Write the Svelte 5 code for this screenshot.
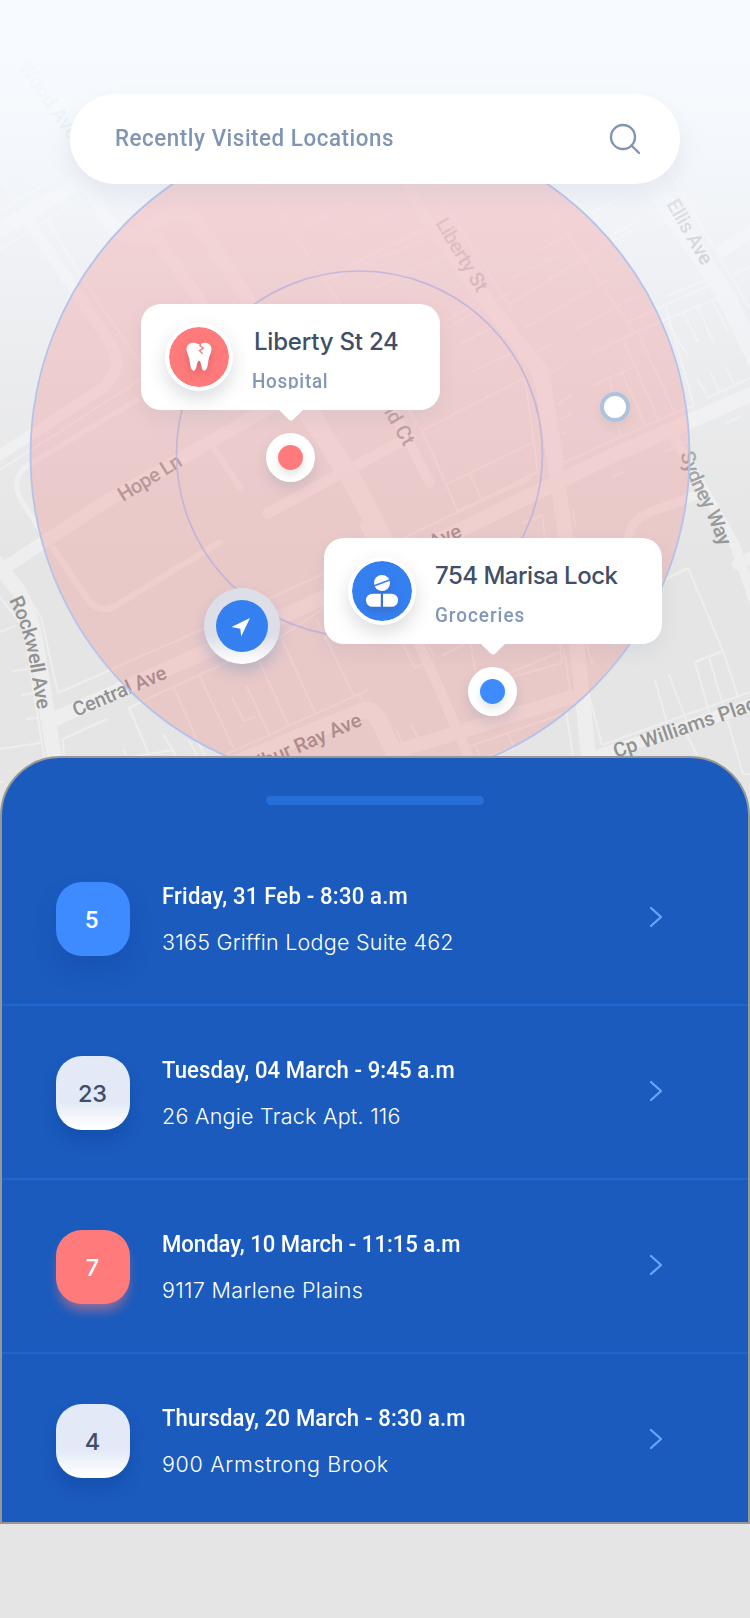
<script>
  const visits = [
    { day: '5', tone: 'blue', time: 'Friday, 31 Feb - 8:30 a.m', timeWidth: 244, place: '3165 Griffin Lodge Suite 462', placeWidth: 289.5 },
    { day: '23', tone: 'light', time: 'Tuesday, 04 March - 9:45 a.m', timeWidth: 290.5, place: '26 Angie Track Apt. 116', placeWidth: 236.5 },
    { day: '7', tone: 'red', time: 'Monday, 10 March - 11:15 a.m', timeWidth: 297, place: '9117 Marlene Plains', placeWidth: 199 },
    { day: '4', tone: 'light', time: 'Thursday, 20 March - 8:30 a.m', timeWidth: 301.5, place: '900 Armstrong Brook', placeWidth: 224 }
  ];

  // Spreads the letters of a line so that it fills the given width.
  // A squeeze below 1 narrows the glyphs themselves first.
  function track(node, { width, squeeze = 1 }) {
    const natural = node.offsetWidth;
    const gaps = node.textContent.length - 1;
    node.style.letterSpacing = `${((width + 2) / squeeze - natural) / gaps}px`;
    if (squeeze !== 1) node.style.transform = `scaleX(${squeeze})`;
  }

  const wideRoads = [
    [14, 'M0 230 L77 184 Q84 180 90 190 L110 224 Q118 236 135 234 L172 213 Q184 206 197 222 L253 307 L350 477 L412 610'],
    [12, 'M135 236 Q152 232 160 243 L213 320'],
    [11, 'M30 223 L112 346 Q124 368 103 388 L0 455'],
    [13, 'M0 571 L97 507 L290 396'],
    [6, 'M210 443 L240 487'],
    [11, 'M268 513 L340 474 L410 437'],
    [20, 'M307 410 L350 477 Q372 515 395 565'],
    [10, 'M385 395 L430 483'],
    [5, 'M137 400 L27 466 Q11 478 20 498 L40 530'],
    [6, 'M53 548 L88 600 Q100 615 117 605 L220 542'],
    [11, 'M408 190 L478 295'],
    [15, 'M478 290 L536 366 Q543 380 546 405 L565 530 L577 647 L589 760'],
    [15, 'M750 395 L688 422 L605 459 L458 531 L325 597 L207 651 L57 718'],
    [18, 'M652 183 L728 300 L770 390'],
    [12, 'M722 251 L760 226'],
    [15, 'M-4 562 L18 590 Q32 612 37 650 L58 780'],
    [10, 'M672 433 L735 545 L757 610'],
    [12, 'M738 564 L756 555'],
    [9, 'M629 535 Q632 520 648 513 L697 495'],
    [14, 'M395 752 L572 697'],
    [17, 'M220 770 L362 711 Q372 708 378 718 L400 765'],
    [12, 'M594 757 L760 702'],
    [10, 'M365 525 L440 690 L470 760']
  ];

  const thinRoads = [
    'M47 220 L90 290 L141 364', 'M0 250 L83 197', 'M0 211 L80 163', 'M0 177 L17 200', 'M13 147 L38 190',
    'M50 167 L59 176', 'M0 470 L140 380', 'M263 187 L340 303', 'M297 230 L353 202', 'M338 240 L390 214',
    'M347 267 L420 230', 'M323 280 L430 238', 'M435 185 Q444 210 450 213 L512 310', 'M495 303 L548 370 L563 463 L690 406',
    'M395 245 L445 220', 'M375 288 L460 248', 'M448 320 L476 303', 'M461 343 L492 328', 'M473 371 L512 353',
    'M447 328 L510 292', 'M512 278 L558 255', 'M536 252 L604 214', 'M548 279 L632 230', 'M510 304 L570 268',
    'M542 197 L617 307 L633 330', 'M592 213 L649 183', 'M608 237 L636 223', 'M652 211 L666 203', 'M658 226 L684 214',
    'M526 327 L608 280', 'M577 329 L636 296', 'M538 351 L552 344', 'M551 372 L562 367', 'M558 404 L571 396',
    'M560 419 L571 414', 'M562 434 L567 432', 'M592 353 L650 326 L735 291', 'M628 322 L750 267', 'M594 385 L634 367',
    'M624 341 L658 419', 'M638 333 L674 411', 'M622 373 L645 425', 'M610 380 L620 437', 'M666 308 L694 406 L675 413',
    'M668 323 L688 356', 'M683 312 L698 342', 'M698 307 L713 342', 'M712 300 L728 331', 'M668 170 L752 312',
    'M667 296 L708 279', 'M698 379 L708 398 L752 377', 'M711 373 L719 391', 'M726 368 L734 384', 'M726 423 L740 417',
    'M666 451 L691 440', 'M612 477 L623 472', 'M408 410 L423 432 L458 512', 'M423 430 L525 378', 'M525 378 L538 472 L458 511',
    'M447 484 L532 443', 'M470 475 L482 500', 'M573 510 L575 525', 'M523 523 L542 515 L545 540',
    'M395 542 L458 512 L530 479', 'M325 573 L203 629 L58 693 L41 617 L13 575', 'M330 604 L281 637 L160 693 L129 708 L148 752',
    'M0 597 L24 628 L44 757', 'M0 632 L15 626', 'M12 671 L28 669', 'M22 695 L34 693', 'M27 719 L36 718', 'M0 749 L40 743',
    'M64 757 L63 739 L107 719', 'M130 757 L173 750', 'M163 734 L176 756', 'M174 688 L197 740', 'M200 677 L233 747',
    'M281 637 L315 713', 'M260 663 L288 724', 'M247 687 L270 736', 'M232 698 L244 721 L255 717', 'M317 620 L354 696',
    'M227 754 L368 690', 'M360 695 L372 725', 'M189 741 L198 757', 'M198 742 L206 757', 'M124 750 L127 757',
    'M396 630 L415 668 L430 661', 'M425 641 L434 655', 'M443 655 L465 644', 'M470 640 L475 670', 'M508 678 L562 663 L555 600',
    'M515 695 L505 675 L560 652', 'M564 650 L570 690', 'M585 640 L592 663', 'M566 710 L573 757', 'M585 680 L602 745 L750 692',
    'M462 749 L562 714', 'M397 731 L405 750', 'M411 724 L420 742', 'M475 745 L480 757', 'M508 734 L514 747 L487 757',
    'M664 580 L688 568 L723 651 L738 697', 'M695 662 L723 651', 'M695 662 L709 712', 'M709 657 L743 774 L755 774',
    'M655 680 L669 730', 'M669 675 L690 730', 'M687 735 L698 757', 'M0 782 L3 782'
  ];
</script>

<main class="screen">
  <section class="map">
    <svg class="streets" width="750" height="860" viewBox="0 0 750 860">
      <defs>
        <linearGradient id="haze" x1="0" y1="0" x2="0" y2="1">
          <stop offset="0" stop-color="#f7fbff" />
          <stop offset="0.17" stop-color="#f7fbff" stop-opacity="0.96" />
          <stop offset="0.45" stop-color="#f5f8fe" stop-opacity="0.67" />
          <stop offset="0.72" stop-color="#f4f6fa" stop-opacity="0.34" />
          <stop offset="1" stop-color="#f4f6fa" stop-opacity="0" />
        </linearGradient>
        <path id="rockwell" d="M9 600 Q24 630 29 660 L40 725" />
        <path id="sydney" d="M680 454 Q690 484 705 511 L726 562" />
      </defs>
      <rect width="750" height="860" fill="#e5e5e5" />
      <g class="roads">
        {#each wideRoads as [width, d]}
          <path {d} stroke-width={width} />
        {/each}
        {#each thinRoads as d}
          <path {d} stroke-width="2" />
        {/each}
      </g>
      <g class="names">
        <text transform="translate(18 67) rotate(55)">Wood Ave</text>
        <text transform="translate(435 223) rotate(59)" textLength="82">Liberty St</text>
        <text transform="translate(666 204) rotate(60)" textLength="72">Ellis Ave</text>
        <text transform="translate(404 447) rotate(60)" text-anchor="end">Field Ct</text>
        <text transform="translate(123 502) rotate(-31.5)" textLength="71">Hope Ln</text>
        <text transform="translate(76 717) rotate(-23)" textLength="100">Central Ave</text>
        <text transform="translate(463 536) rotate(-24)" text-anchor="end">Central Ave</text>
        <text transform="translate(363 725) rotate(-23.5)" text-anchor="end">Wilbur Ray Ave</text>
        <text transform="translate(616 758) rotate(-19)">Cp Williams Place</text>
        <text><textPath href="#rockwell" textLength="114">Rockwell Ave</textPath></text>
        <text><textPath href="#sydney" textLength="101">Sydney Way</textPath></text>
      </g>
      <rect width="750" height="560" fill="url(#haze)" />
      <circle cx="360" cy="455" r="329.5" fill="#f47f7f" fill-opacity="0.28" stroke="#b5c3ea" stroke-width="1.8" />
      <circle cx="359.5" cy="454" r="183" fill="none" stroke="#b4b0dc" stroke-opacity="0.75" stroke-width="1.7" />
    </svg>

    <div class="search">
      <span class="query"><span use:track={{ width: 276, squeeze: 0.93 }}>Recently Visited Locations</span></span>
      <svg width="32" height="32" viewBox="0 0 32 32">
        <circle cx="14" cy="14" r="12" />
        <path d="M22.5 22.5 L30 30" />
      </svg>
    </div>

    <article class="card liberty">
      <div class="emblem coral">
        <svg width="26" height="30" viewBox="0 0 26 30">
          <path fill="#fff" d="M13 2.6 C9 .2 4.800 .3 2.300 2.700 C-.3 5.200 .2 9.400 2 13 C3.300 15.700 3.500 18 4 21.500 C4.500 25.200 5.600 28.500 7.700 28.800 C11 29.200 10.300 19.500 13 18.600 C15.700 19.500 15 29.200 18.300 28.800 C20.400 28.500 21.500 25.200 22 21.500 C22.500 18 22.700 15.700 24 13 C25.800 9.400 26.300 5.200 23.700 2.700 C21.200 .3 17 .2 13 2.600 Z" />
          <path fill="none" stroke="#ff7b7b" stroke-width="1.500" d="M15 .5 L14 3.800 L17.300 6.200 L13.600 8.700 L16.600 11.800" />
        </svg>
      </div>
      <div class="details">
        <h2 class="indent"><span use:track={{ width: 142.5 }}>Liberty St 24</span></h2>
        <p class="cut"><span use:track={{ width: 74, squeeze: 0.92 }}>Hospital</span></p>
      </div>
      <svg class="tip" width="30" height="13" viewBox="0 0 30 13"><path d="M2 0 H28 L17.500 10.300 Q15 12.700 12.500 10.300 Z" /></svg>
    </article>
    <div class="pin coral-pin"><i></i></div>

    <article class="card marisa">
      <div class="emblem azure">
        <svg width="34" height="34" viewBox="0 0 34 34">
          <circle cx="17" cy="9" r="8" fill="#fff" />
          <path d="M8.500 12 L25.500 5.700" stroke="#3580f0" stroke-width="1.700" />
          <path fill="#fff" d="M7.500 19.700 H15.800 V32.800 H7.500 A6.500 6.500 0 0 1 7.500 19.700 Z M18 19.700 H26.500 A6.500 6.500 0 0 1 26.500 32.800 H18 Z" />
        </svg>
      </div>
      <div class="details">
        <h2><span use:track={{ width: 181 }}>754 Marisa Lock</span></h2>
        <p><span use:track={{ width: 87, squeeze: 0.92 }}>Groceries</span></p>
      </div>
      <svg class="tip" width="30" height="13" viewBox="0 0 30 13"><path d="M2 0 H28 L17.500 10.300 Q15 12.700 12.500 10.300 Z" /></svg>
    </article>
    <div class="pin azure-pin"><i></i></div>

    <div class="here">
      <svg width="52" height="52" viewBox="0 0 52 52">
        <circle cx="26" cy="26" r="26" fill="#3580f0" />
        <path d="M15.500 27 L34 18 L25.200 36.500 L24.300 28.700 Z" fill="#fff" />
      </svg>
    </div>
    <div class="spot"></div>
  </section>

  <section class="sheet">
    <div class="handle"></div>
    <ul>
      {#each visits as visit}
        <li>
          <div class="day {visit.tone}">{visit.day}</div>
          <div class="visit">
            <h3><span use:track={{ width: visit.timeWidth, squeeze: 0.92 }}>{visit.time}</span></h3>
            <p><span use:track={{ width: visit.placeWidth }}>{visit.place}</span></p>
          </div>
          <svg class="chevron" width="14" height="22" viewBox="0 0 14 22"><path d="M2 2 L12 11 L2 20" /></svg>
        </li>
      {/each}
    </ul>
  </section>
</main>

<style>
  :global(body) { margin: 0; background: #e5e5e5; }
  .screen { width: 750px; height: 1618px; overflow: hidden; background: #e5e5e5; display: flex; flex-direction: column; }
  .map { position: relative; height: 756px; flex: none; padding: 94px 70px 0; box-sizing: border-box; }
  .streets { position: absolute; left: 0; top: 0; }
  .roads path { fill: none; stroke: #eeeeee; stroke-linecap: round; stroke-linejoin: round; }
  .names { font: 500 20px Roboto, sans-serif; fill: #929292; }

  .search {
    position: relative; height: 90px; border-radius: 45px; background: #fff;
    box-shadow: 0 10px 22px rgba(140, 165, 185, 0.16);
    display: flex; align-items: center; justify-content: space-between; box-sizing: border-box; padding: 0 39px 0 45px;
  }
  .query { font: 500 24px/30px Roboto, sans-serif; color: #8094b4; padding-bottom: 2px; white-space: nowrap; }
  .search svg { fill: none; stroke: #8094b4; stroke-width: 2.400; stroke-linecap: round; }

  .card {
    position: absolute; height: 106px; border-radius: 20px; background: #fff; display: flex; box-sizing: border-box;
    padding: 19px 0 0 24px; gap: 19px; box-shadow: 0 8px 18px rgba(120, 140, 160, 0.12);
  }
  .liberty { left: 141px; top: 304px; width: 299px; }
  .marisa { left: 324px; top: 538px; width: 338px; }
  .emblem {
    width: 60px; height: 60px; border: 4.500px solid #fff; border-radius: 50%; flex: none;
    display: grid; place-items: center; box-shadow: 0 8px 18px rgba(60, 65, 75, 0.18); background-clip: padding-box;
  }
  .coral { background-color: #ff7b7b; }
  .azure { background-color: #3580f0; }
  .emblem svg { filter: drop-shadow(0 4px 4px rgba(60, 20, 50, 0.18)); }
  h2, h3, p { margin: 0; white-space: nowrap; }
  span { display: inline-block; transform-origin: 0 50%; }
  h2 { font: 500 24px/30px Inter, sans-serif; color: #404e68; margin-top: 4px; }
  .card p { font: 500 20.500px/24px Roboto, sans-serif; color: #8297b8; margin-top: 12px; }
  .indent { padding-left: 2px; }
  .cut { height: 20px; overflow: hidden; }
  .tip { position: absolute; top: 105px; fill: #fff; }
  .liberty .tip { left: 134.500px; }
  .marisa .tip { left: 154px; }

  .pin {
    position: absolute; width: 49px; height: 49px; border-radius: 50%; background: #fff; display: grid; place-items: center;
    box-shadow: 0 6px 12px rgba(110, 130, 150, 0.22);
  }
  .pin i { width: 25px; height: 25px; border-radius: 50%; box-shadow: 0 5px 8px rgba(60, 70, 80, 0.14); }
  .coral-pin { left: 266px; top: 433px; }
  .coral-pin i { background: #ff7b7b; }
  .azure-pin { left: 468px; top: 667px; }
  .azure-pin i { background: #3d8bff; }
  .here {
    position: absolute; left: 203.500px; top: 588px; width: 76px; height: 76px; border-radius: 50%;
    background: linear-gradient(#dcdfe7 62%, #fff); display: grid; place-items: center;
    box-shadow: 0 8px 14px rgba(110, 150, 190, 0.38);
  }
  .spot {
    position: absolute; left: 600px; top: 392px; width: 22px; height: 22px; border: 4px solid #afc2dd; border-radius: 50%;
    background: #fff; box-shadow: 0 5px 8px rgba(150, 170, 180, 0.2);
  }

  .sheet {
    position: relative; height: 768px; flex: none; box-sizing: border-box; border: 2px solid #979797;
    border-radius: 60px 60px 0 0; background: #1a5bbd; overflow: hidden;
  }
  .handle { width: 218px; height: 9px; margin: 38px auto 0; border-radius: 5px; background: #266fd9; }
  ul { list-style: none; margin: 27px 0 0; padding: 0; }
  li { height: 174px; border-bottom: 2px solid #1f66ce; box-sizing: border-box; display: flex; align-items: flex-start; padding: 50px 85px 0 54px; }
  .day {
    width: 74px; height: 74px; border-radius: 26px; display: grid; place-items: center;
    font: 500 23.500px/30px Inter, sans-serif; box-sizing: border-box; padding: 1px 1px 0 0; flex: none;
  }
  .blue { background: #3d8bff; color: #fff; box-shadow: 0 14px 22px rgba(15, 65, 155, 0.3); font-family: Roboto, sans-serif; font-size: 24px; padding-right: 3px; }
  .light { background: linear-gradient(#e3e9f6 62%, #fff 97%); color: #404e68; box-shadow: 0 10px 14px rgba(15, 65, 155, 0.4); }
  .red { background: #ff7b7b; color: #fff; box-shadow: 0 9px 12px -3px rgba(255, 123, 123, 0.55); }
  .visit { margin-left: 32px; flex: 1; }
  h3 { font: 500 24px/30px Roboto, sans-serif; color: #fff; margin-top: -1px; }
  .visit p { font: 300 21.500px/28px Inter, sans-serif; color: #fff; margin-top: 17px; }
  .chevron { margin-top: 24px; fill: none; stroke: #66a6fb; stroke-width: 2.300; stroke-linecap: round; stroke-linejoin: round; }
</style>
